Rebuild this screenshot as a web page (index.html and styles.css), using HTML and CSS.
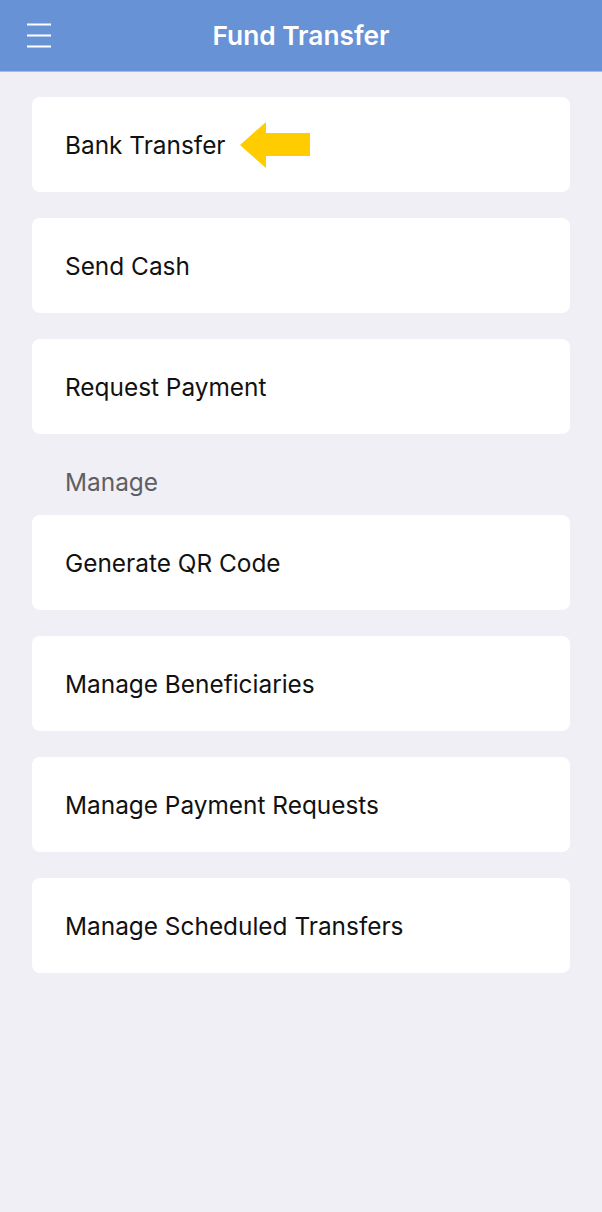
FILE: index.html
```html
<!DOCTYPE html>
<html>
<head>
<meta charset="UTF-8">
  <title>Fund Transfer</title>
  <link rel="stylesheet" href="styles.css">
</head>
<body>
  <div class="header">
    <button class="menu-btn" aria-label="Menu">
      <svg width="26" height="26" viewBox="0 0 26 26" fill="none" stroke="white" stroke-width="2.2">
        <path d="M1 2.5h24M1 13.5h24M1 24.5h24" />
      </svg>
    </button>
    <h1>Fund Transfer</h1>
  </div>

  <div class="content">
    <div class="group">
      <div class="item">
        <span>Bank Transfer</span>
        <svg class="arrow" width="70" height="46" viewBox="0 0 70 46">
          <path d="M0 23 L26 0 L26 11 L70 11 L70 34 L26 34 L26 46 Z" fill="#ffcc00" />
        </svg>
      </div>
      <div class="item"><span>Send Cash</span></div>
      <div class="item"><span>Request Payment</span></div>
    </div>

    <div class="section-label">Manage</div>

    <div class="group">
      <div class="item"><span>Generate QR Code</span></div>
      <div class="item"><span>Manage Beneficiaries</span></div>
      <div class="item"><span>Manage Payment Requests</span></div>
      <div class="item"><span>Manage Scheduled Transfers</span></div>
    </div>
  </div>
</body>
</html>
```

FILE: styles.css
```css
body {
  margin: 0;
  background: #f0eff5;
  font-family: Inter, Roboto, 'Noto Sans', sans-serif;
  color: #111;
  min-height: 1212px;
}

.header {
  position: relative;
  height: 71px;
  background: #6792d6;
  border-bottom: 1px solid #a3bbea;
  display: flex;
  align-items: center;
  justify-content: center;
}

.header h1 {
  margin: 0;
  color: white;
  font-size: 26.3px;
  font-weight: 600;
}

.menu-btn {
  position: absolute;
  left: 26px;
  top: 22px;
  padding: 0;
  border: none;
  background: none;
  width: 26px;
  height: 26px;
}

.menu-btn svg {
  display: block;
}

.content {
  padding: 25px 32px;
}

.group {
  display: flex;
  flex-direction: column;
  gap: 26px;
}

.item {
  height: 95px;
  background: white;
  border-radius: 8px;
  display: flex;
  align-items: center;
  padding: 0 33px;
  gap: 14px;
  font-size: 24.4px;
  font-weight: 400;
}

.arrow {
  display: block;
}

.section-label {
  height: 81px;
  padding: 0 33px;
  line-height: 97px;
  font-size: 24.4px;
  color: #5f5e63;
  box-sizing: border-box;
}
```
